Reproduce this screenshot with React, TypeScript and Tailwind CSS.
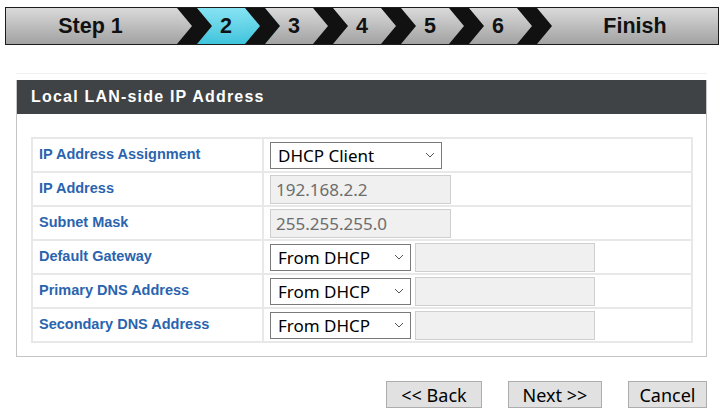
import React from 'react'

const GRAY_TOP = '#dadada'
const GRAY_BOT = '#a2a2a2'
const CYAN_TOP = '#86e3f3'
const CYAN_BOT = '#3ec4dc'

const Chevron = ({ idx, before, after }: { idx: number; before: 'gray' | 'cyan'; after: 'gray' | 'cyan' }) => {
  const grad = (c: 'gray' | 'cyan') => `url(#chev-${c}-${idx})`
  return (
    <svg width="35" height="36" viewBox="0 0 35 36" className="shrink-0 block">
      <defs>
        <linearGradient id={`chev-gray-${idx}`} x1="0" y1="0" x2="0" y2="36" gradientUnits="userSpaceOnUse">
          <stop offset="0" stopColor={GRAY_TOP} />
          <stop offset="1" stopColor={GRAY_BOT} />
        </linearGradient>
        <linearGradient id={`chev-cyan-${idx}`} x1="0" y1="0" x2="0" y2="36" gradientUnits="userSpaceOnUse">
          <stop offset="0" stopColor={CYAN_TOP} />
          <stop offset="1" stopColor={CYAN_BOT} />
        </linearGradient>
      </defs>
      <rect x="0" y="0" width="35" height="36" fill={grad(before)} />
      <polygon points="20,0 35,0 35,18" fill={grad(after)} />
      <polygon points="20,36 35,36 35,18" fill={grad(after)} />
      <polygon points="0,0 20,0 35,18 20,36 0,36 15,18" fill="#111" />
    </svg>
  )
}

const StepBar = () => {
  const steps = ['2', '3', '4', '5', '6']
  const active = 0
  return (
    <div className="ml-[5px] mt-[7px] w-[714px] h-[38px] border border-[#1c1c1c] flex bg-linear-to-b from-[#dadada] to-[#a2a2a2] font-bold text-[21.5px] text-[#111]">
      <div className="w-[171px] flex items-center justify-center pr-[2px]">Step 1</div>
      {steps.map((s, i) => (
        <React.Fragment key={s}>
          <Chevron
            idx={i}
            before={i - 1 === active ? 'cyan' : 'gray'}
            after={i === active ? 'cyan' : 'gray'}
          />
          <div
            className={
              'w-[33px] flex items-center justify-center pr-[5px] ' +
              (i === active ? 'bg-linear-to-b from-[#86e3f3] to-[#3ec4dc]' : '')
            }
          >
            {s}
          </div>
        </React.Fragment>
      ))}
      <Chevron idx={9} before="gray" after="gray" />
      <div className="flex-1 flex items-center justify-center">Finish</div>
    </div>
  )
}

const Caret = () => (
  <svg width="10" height="6" viewBox="0 0 10 6" className="shrink-0">
    <path d="M1 1l4 4 4-4" fill="none" stroke="#555" strokeWidth="1" />
  </svg>
)

const Select = ({ value, width }: { value: string; width: string }) => (
  <div className={`${width} h-[27px] border border-[#7a7a7a] bg-white flex items-center justify-between pl-[7px] pr-[6px] text-[17px] text-black font-['Noto_Sans',sans-serif]`}>
    <span className="leading-none">{value}</span>
    <Caret />
  </div>
)

const Disabled = ({ value, width }: { value?: string; width: string }) => (
  <div className={`${width} h-[29px] border border-[#cfcfcf] bg-[#f0f0f0] flex items-center pl-[5px] text-[17px] text-[#6d6d6d] font-['Noto_Sans',sans-serif]`}>
    <span className="leading-none">{value}</span>
  </div>
)

const Pair = () => (
  <div className="flex items-center gap-[4px]">
    <Select value="From DHCP" width="w-[141px]" />
    <Disabled width="w-[180px]" />
  </div>
)

const rows: { label: string; field: React.ReactNode }[] = [
  { label: 'IP Address Assignment', field: <Select value="DHCP Client" width="w-[172px]" /> },
  { label: 'IP Address', field: <Disabled value="192.168.2.2" width="w-[181px]" /> },
  { label: 'Subnet Mask', field: <Disabled value="255.255.255.0" width="w-[181px]" /> },
  { label: 'Default Gateway', field: <Pair /> },
  { label: 'Primary DNS Address', field: <Pair /> },
  { label: 'Secondary DNS Address', field: <Pair /> },
]

export default function App() {
  return (
    <div className="w-[724px] h-[414px] bg-white overflow-hidden font-['Liberation_Sans',Arial,sans-serif]">
      <StepBar />

      <div className="ml-[16px] mt-[28px] w-[691px] h-px bg-[#f1f1f1]" />

      {/* Panel */}
      <div className="ml-[16px] mt-[6px] w-[691px] border border-t-0 border-[#c4c4c4]">
        <div className="h-[34px] bg-[#404345] flex items-center pl-[14px] text-white font-bold text-[16px] tracking-[1.2px]">
          Local LAN-side IP Address
        </div>
        <div className="pl-[14px] pr-[13px] pt-[23px] pb-[13px]">
          <div className="border-2 border-b-0 border-[#e8e8e8]">
            {rows.map((r) => (
              <div key={r.label} className="h-[34px] flex border-b-2 border-[#e8e8e8]">
                <div className="w-[231px] border-r-2 border-[#e8e8e8] flex items-center pl-[6px] text-[14.5px] font-bold text-[#2a64ae]">
                  {r.label}
                </div>
                <div className="flex-1 flex items-center pl-[6px]">{r.field}</div>
              </div>
            ))}
          </div>
        </div>
      </div>

      {/* Buttons */}
      <div className="flex justify-end gap-[26px] pr-[17px] mt-[24px] font-['Noto_Sans',sans-serif] text-[18px] text-black">
        <button className="w-[96px] h-[27px] bg-[#e1e1e1] border border-[#adadad] flex items-center justify-center leading-none">
          &lt;&lt; Back
        </button>
        <button className="w-[94px] h-[27px] bg-[#e1e1e1] border border-[#adadad] flex items-center justify-center leading-none">
          Next &gt;&gt;
        </button>
        <button className="w-[79px] h-[27px] bg-[#e1e1e1] border border-[#adadad] flex items-center justify-center leading-none">
          Cancel
        </button>
      </div>
    </div>
  )
}
